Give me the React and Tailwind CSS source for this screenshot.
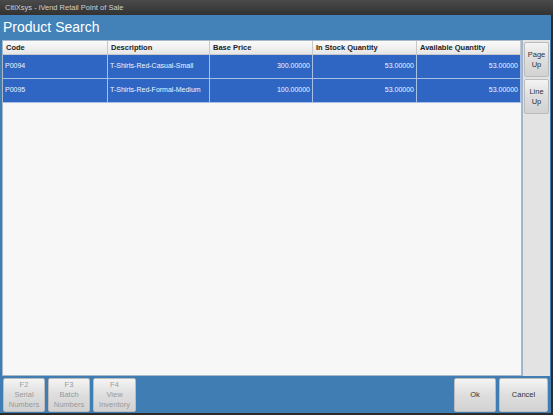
import React from "react";

const columns = [
  { key: "code", label: "Code", w: "w-[105px]", align: "text-left" },
  { key: "desc", label: "Description", w: "w-[102px]", align: "text-left" },
  { key: "price", label: "Base Price", w: "w-[103px]", align: "text-right" },
  { key: "stock", label: "In Stock Quantity", w: "w-[104px]", align: "text-right" },
  { key: "avail", label: "Available Quantity", w: "w-[104px]", align: "text-right" },
];

const rows = [
  { code: "P0094", desc: "T-Shirts-Red-Casual-Small", price: "300.00000", stock: "53.00000", avail: "53.00000" },
  { code: "P0095", desc: "T-Shirts-Red-Formal-Medium", price: "100.00000", stock: "53.00000", avail: "53.00000" },
];

const Btn = ({ children, className = "" }) => (
  <button
    className={`flex flex-col items-center justify-center leading-[10px] text-[7.5px] bg-gradient-to-b from-[#f4f4f4] via-[#dedede] to-[#d2d2d2] border border-[#bcbcbc] rounded-[2px] ${className}`}
  >
    {children}
  </button>
);

const App = () => {
  return (
    <div className="w-[553px] h-[415px] flex flex-col bg-[#2c2c2c] overflow-hidden" style={{ fontFamily: '"Liberation Sans", Arial, sans-serif' }}>
      {/* Title bar */}
      <div className="h-[15px] shrink-0 flex items-center px-[5px] bg-gradient-to-b from-[#4a4a4a] to-[#333] text-[#cfcfcf] text-[7.5px]">
        CitiXsys - iVend Retail Point of Sale
      </div>

      <div className="flex-1 flex flex-col mr-[2px] mb-[2px] bg-[#3f7eb4]">
        {/* Header */}
        <div className="h-[25px] shrink-0 flex items-center px-[3px] text-white text-[14px] bg-[#4282b8]">
          Product Search
        </div>

        {/* Main area */}
        <div className="flex-1 flex min-h-0 pl-[2px] pr-[1px]">
          {/* Grid */}
          <div className="w-[520px] flex flex-col bg-[#f7f7f7] border border-[#a9b8c8]">
            <div className="flex h-[14px] shrink-0 bg-gradient-to-b from-[#fbfbfb] to-[#e6e6e6] border-b border-[#c8c8c8]">
              {columns.map((c) => (
                <div key={c.key} className={`${c.w} flex items-center px-[3px] font-bold text-[7.5px] text-[#222] whitespace-nowrap border-r border-[#c8c8c8]`}>
                  {c.label}
                </div>
              ))}
            </div>
            {rows.map((r) => (
              <div key={r.code} className="flex h-[24px] bg-[#2f66c3] border-b border-[#a8bfe6]">
                {columns.map((c) => (
                  <div key={c.key} className={`${c.w} flex items-center px-[2px] text-[7px] text-[#f0f4ff] whitespace-nowrap overflow-hidden border-r border-[#a8bfe6] ${c.align === "text-right" ? "justify-end" : ""}`}>
                    {r[c.key]}
                  </div>
                ))}
              </div>
            ))}
          </div>

          {/* Side buttons */}
          <div className="flex-1 flex flex-col gap-[2px] pt-[2px] px-[1px] bg-[#e3e3e3] border-l border-[#9fb3c8]">
            <Btn className="h-[35px] w-full text-[#333]">
              <span>Page</span>
              <span>Up</span>
            </Btn>
            <Btn className="h-[35px] w-full text-[#333]">
              <span>Line</span>
              <span>Up</span>
            </Btn>
          </div>
        </div>

        {/* Bottom bar */}
        <div className="h-[37px] shrink-0 flex items-center gap-[3px] px-[3px] bg-[#3f7db3]">
          <Btn className="w-[42px] h-[34px] text-[#9a9a9a]">
            <span>F2</span>
            <span>Serial</span>
            <span>Numbers</span>
          </Btn>
          <Btn className="w-[42px] h-[34px] text-[#9a9a9a]">
            <span>F3</span>
            <span>Batch</span>
            <span>Numbers</span>
          </Btn>
          <Btn className="w-[43px] h-[34px] text-[#9a9a9a]">
            <span>F4</span>
            <span>View</span>
            <span>Inventory</span>
          </Btn>
          <div className="flex-1" />
          <Btn className="w-[42px] h-[34px] text-[#333]">Ok</Btn>
          <Btn className="w-[49px] h-[34px] text-[#333]">Cancel</Btn>
        </div>
      </div>
    </div>
  );
};

export default App;
